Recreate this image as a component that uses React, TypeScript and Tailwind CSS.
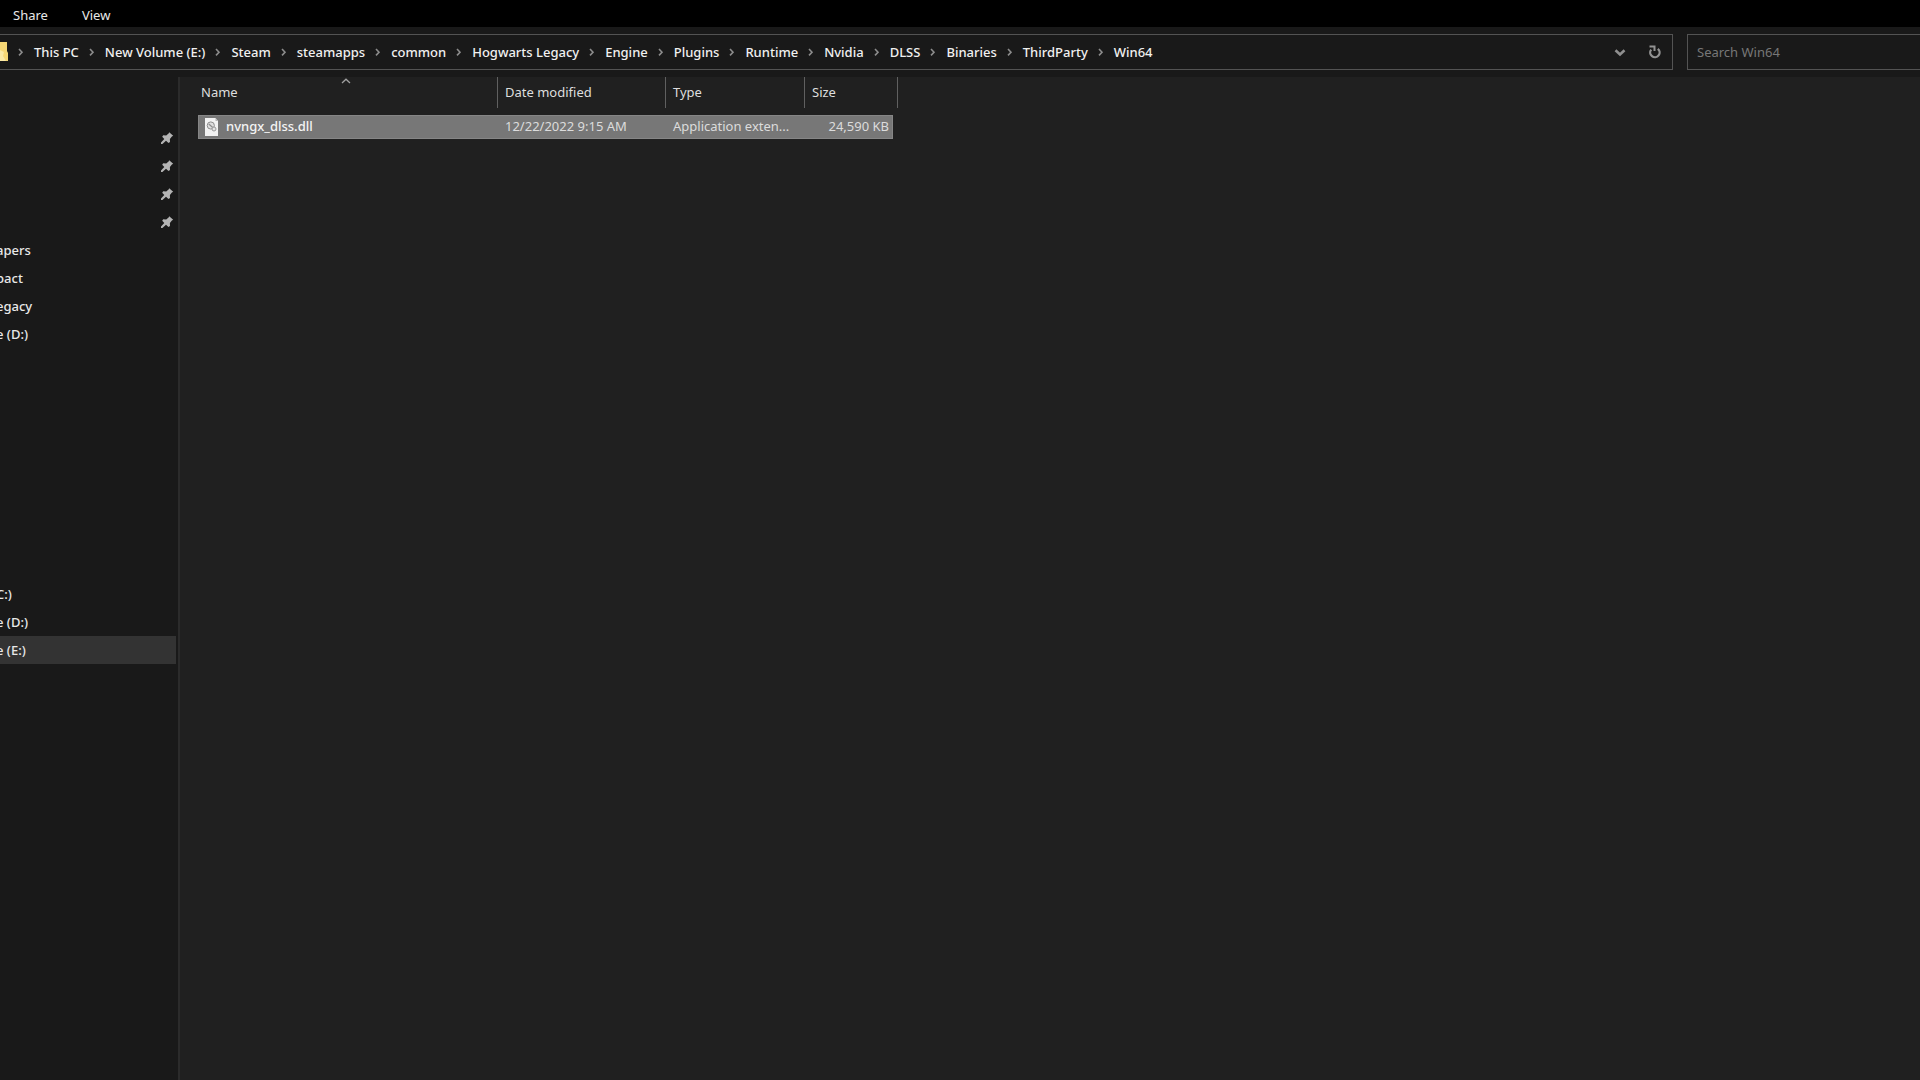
import { Fragment } from 'react';

const crumbs = [
  'This PC', 'New Volume (E:)', 'Steam', 'steamapps', 'common', 'Hogwarts Legacy', 'Engine',
  'Plugins', 'Runtime', 'Nvidia', 'DLSS', 'Binaries', 'ThirdParty', 'Win64',
];
const quickAccess = ['apers', 'pact', 'egacy', 'e (D:)'];
const drives = ['C:)', 'e (D:)', 'e (E:)'];

function Separator() {
  return (
    <svg viewBox="0 0 26 12" className="h-3 w-[26px] shrink-0" fill="none" stroke="#8c8c8c" strokeWidth="1.6">
      <path d="M11 3l3 3.2-3 3.2" />
    </svg>
  );
}

function Pin() {
  return (
    <svg viewBox="0 0 14 14" className="h-[14px] w-[14px]" fill="#b4b4b4">
      <path d="M9.200 1.200l4 3.600-1.300.8-2 2.400.1 3-1.500 1-2.500-2.300L2.400 13H1v-1.600L4.300 8 2.200 5.800l1-1.500 3 .2L8.600 2.400z" />
    </svg>
  );
}

function DllIcon() {
  return (
    <svg viewBox="0 0 13 18" className="h-[18px] w-[13px] shrink-0">
      <path d="M0 0h10.500L13 3v15H0z" fill="#f2f2f2" />
      <path d="M10.500 0v3H13z" fill="#b5b5b5" />
      <circle cx="5.800" cy="7.500" r="3.600" fill="#dedede" stroke="#8d8d8d" strokeWidth="1" />
      <path d="M3.800 6l5 4.500" stroke="#8d8d8d" strokeWidth="1.200" />
      <circle cx="9" cy="11" r="2" fill="#e4e4e4" stroke="#999" strokeWidth="1" />
    </svg>
  );
}

function AddressBar() {
  return (
    <div className="flex h-[50px] items-start gap-[14px] bg-[#191919] pt-[7px]">
      <div className="flex h-9 flex-1 items-center border border-l-0 border-[#535353] pr-[10px]">
        <svg viewBox="0 0 8 20" className="h-5 w-2 shrink-0">
          <path d="M0 0h7v9l1 2v8H0z" fill="#f6d775" />
          <path d="M0 8l4 2-1 4 3 5H0z" fill="#fbe9a6" />
        </svg>
        <nav className="flex flex-1 items-center font-medium">
          {crumbs.map((c) => (
            <Fragment key={c}>
              <Separator />
              <a href="#" className="whitespace-nowrap text-[#f0f0f0]">{c}</a>
            </Fragment>
          ))}
        </nav>
        <button aria-label="Previous locations" className="mr-[21px]">
          <svg viewBox="0 0 14 14" className="h-[14px] w-[14px]" fill="none" stroke="#8f8f8f" strokeWidth="2.600">
            <path d="M2.500 5.200L7 9.400l4.500-4.200" />
          </svg>
        </button>
        <button aria-label="Refresh">
          <svg viewBox="0 0 14 14" className="h-[14px] w-[14px]" fill="none" stroke="#929292" strokeWidth="2.300">
            <path d="M3.200 4.600A4.700 4.700 0 1 0 9.800 3.800" />
            <path d="M1.500 1.500h5V6" strokeWidth="2" />
          </svg>
        </button>
      </div>
      <input
        type="search"
        aria-label="Search Win64"
        placeholder="Search Win64"
        className="h-9 w-[233px] border border-r-0 border-[#535353] pl-[9px] outline-none placeholder:text-[#777]"
      />
    </div>
  );
}

function Sidebar() {
  return (
    <aside className="w-[178px] shrink-0 overflow-hidden pt-[47px] font-medium">
      {[0, 1, 2, 3].map((i) => (
        <div key={i} className="flex h-7 items-center justify-end pr-1">
          <Pin />
        </div>
      ))}
      <ul className="-ml-1">
        {quickAccess.map((name) => (
          <li key={name} className="flex h-7 items-center">{name}</li>
        ))}
      </ul>
      <ul className="mt-[232px] mr-[2px] -ml-1">
        {drives.map((name) => (
          <li key={name} className={`flex h-7 items-center ${name === 'e (E:)' ? 'bg-[#333]' : ''}`}>
            {name}
          </li>
        ))}
      </ul>
    </aside>
  );
}

function FileTable() {
  const head = 'flex h-[31px] items-center border-r border-[#606060] pb-[2px]';
  const cell = 'h-6 border-y border-[#868686] bg-[#777] p-0';
  return (
    <table className="ml-[18px] w-[700px] table-fixed border-separate border-spacing-0 self-start text-left">
      <colgroup>
        <col className="w-[300px]" />
        <col className="w-[168px]" />
        <col className="w-[139px]" />
        <col className="w-[88px]" />
        <col className="w-[5px]" />
      </colgroup>
      <thead className="text-[#dedede]">
        <tr className="h-[38px] align-top">
          <th className="relative p-0 font-normal">
            <div className={`${head} pl-[3px]`}>Name</div>
            <svg viewBox="0 0 10 6" className="absolute top-px left-[143px] h-[6px] w-[10px]" fill="none" stroke="#a0a0a0" strokeWidth="1.300">
              <path d="M1 5l4-3.800L9 5" />
            </svg>
          </th>
          <th className="p-0 font-normal"><div className={`${head} pl-[7px]`}>Date modified</div></th>
          <th className="p-0 font-normal"><div className={`${head} pl-[7px]`}>Type</div></th>
          <th colSpan={2} className="p-0 font-normal"><div className={`${head} pl-[7px]`}>Size</div></th>
        </tr>
      </thead>
      <tbody className="text-[#dcdcdc]">
        <tr>
          <td className={`${cell} border-l`}>
            <div className="flex items-center gap-2 pl-[6px] font-medium text-[#f4f4f4]">
              <DllIcon />
              <span className="pb-[2px]">nvngx_dlss.dll</span>
            </div>
          </td>
          <td className={cell}><div className="pb-[2px] pl-[7px]">12/22/2022 9:15 AM</div></td>
          <td className={cell}><div className="pb-[2px] pl-[7px] whitespace-nowrap">Application exten...</div></td>
          <td className={`${cell} border-r`}><div className="pr-[3px] pb-[2px] text-right">24,590 KB</div></td>
        </tr>
      </tbody>
    </table>
  );
}

export default function App() {
  return (
    <div className="flex min-h-screen flex-col overflow-hidden bg-[#191919] font-['Noto_Sans','Open_Sans',sans-serif] text-[13px] leading-5 text-[#e8e8e8]">
      <div className="flex h-[27px] items-center gap-[34px] bg-black pt-1 pb-[2px] pl-[13px]">
        <button>Share</button>
        <button>View</button>
      </div>
      <AddressBar />
      <div className="flex flex-1">
        <Sidebar />
        <main className="flex flex-1 border-l-2 border-[#2b2b2b] bg-[#202020]">
          <FileTable />
        </main>
      </div>
    </div>
  );
}
